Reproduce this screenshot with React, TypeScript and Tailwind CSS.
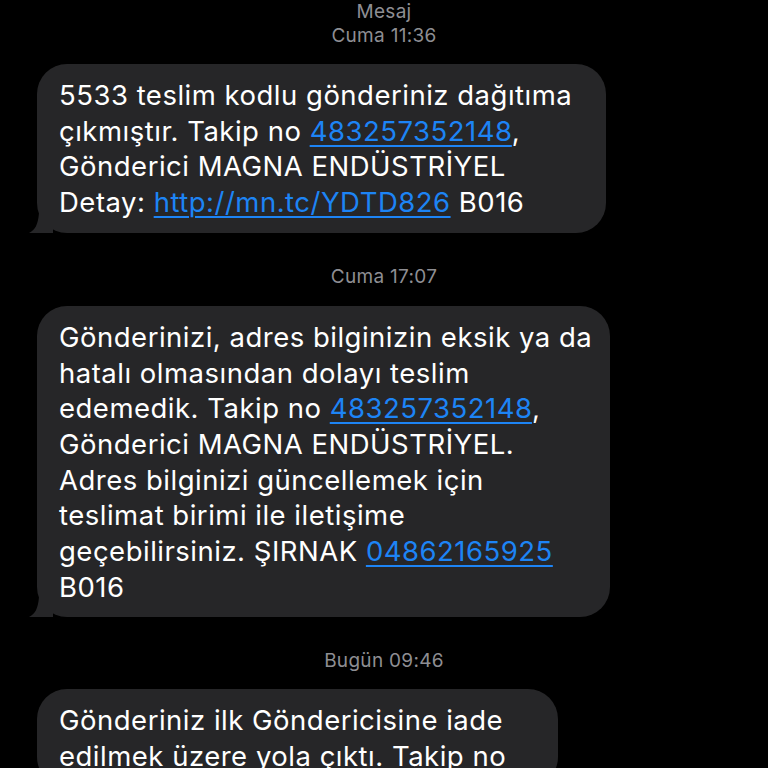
import type { ReactNode } from "react"

function Link({ children }: { children: ReactNode }) {
  return <span className="text-[#1d84f5] underline decoration-[2px] underline-offset-[4px]">{children}</span>
}

function Stamp({ children }: { children: ReactNode }) {
  return <div className="text-center text-[19px] leading-[24px] tracking-[0.3px] text-[#8e8e93]">{children}</div>
}

function Tail() {
  return (
    <svg className="absolute -left-[10px] bottom-0" width="26" height="20" viewBox="0 0 26 20">
      <path d="M26 0 L26 20 L2 20 C8 17 11 12 12 0 Z" fill="#262628" />
    </svg>
  )
}

function Bubble({ width, children }: { width: string; children: ReactNode }) {
  return (
    <div className={`relative ml-[37px] rounded-[30px] bg-[#262628] pl-[22px] pr-4 pt-[14px] pb-[12px] ${width}`}>
      <p className="text-[27.5px] leading-[35.7px] tracking-[0.5px] text-white">{children}</p>
      <Tail />
    </div>
  )
}

export default function App() {
  return (
    <div className="h-[768px] w-[768px] overflow-hidden bg-black font-['Inter','Noto_Sans',sans-serif]">
      <div>
        <Stamp>Mesaj</Stamp>
        <Stamp>Cuma 11:36</Stamp>
      </div>
      <div className="mt-[16px]">
        <Bubble width="w-[569px]">
          5533 teslim kodlu gönderiniz dağıtıma
          <br />
          çıkmıştır. Takip no <Link>483257352148</Link>,
          <br />
          Gönderici MAGNA ENDÜSTRİYEL
          <br />
          Detay: <Link>http://mn.tc/YDTD826</Link> B016
        </Bubble>
      </div>
      <div className="mt-[32px]">
        <Stamp>Cuma 17:07</Stamp>
      </div>
      <div className="mt-[17px]">
        <Bubble width="w-[573px]">
          Gönderinizi, adres bilginizin eksik ya da
          <br />
          hatalı olmasından dolayı teslim
          <br />
          edemedik. Takip no <Link>483257352148</Link>,
          <br />
          Gönderici MAGNA ENDÜSTRİYEL.
          <br />
          Adres bilginizi güncellemek için
          <br />
          teslimat birimi ile iletişime
          <br />
          geçebilirsiniz. ŞIRNAK <Link>04862165925</Link>
          <br />
          B016
        </Bubble>
      </div>
      <div className="mt-[32px]">
        <Stamp>Bugün 09:46</Stamp>
      </div>
      <div className="mt-[16px]">
        <Bubble width="w-[521px]">
          Gönderiniz ilk Göndericisine iade
          <br />
          edilmek üzere yola çıktı. Takip no
        </Bubble>
      </div>
    </div>
  )
}
